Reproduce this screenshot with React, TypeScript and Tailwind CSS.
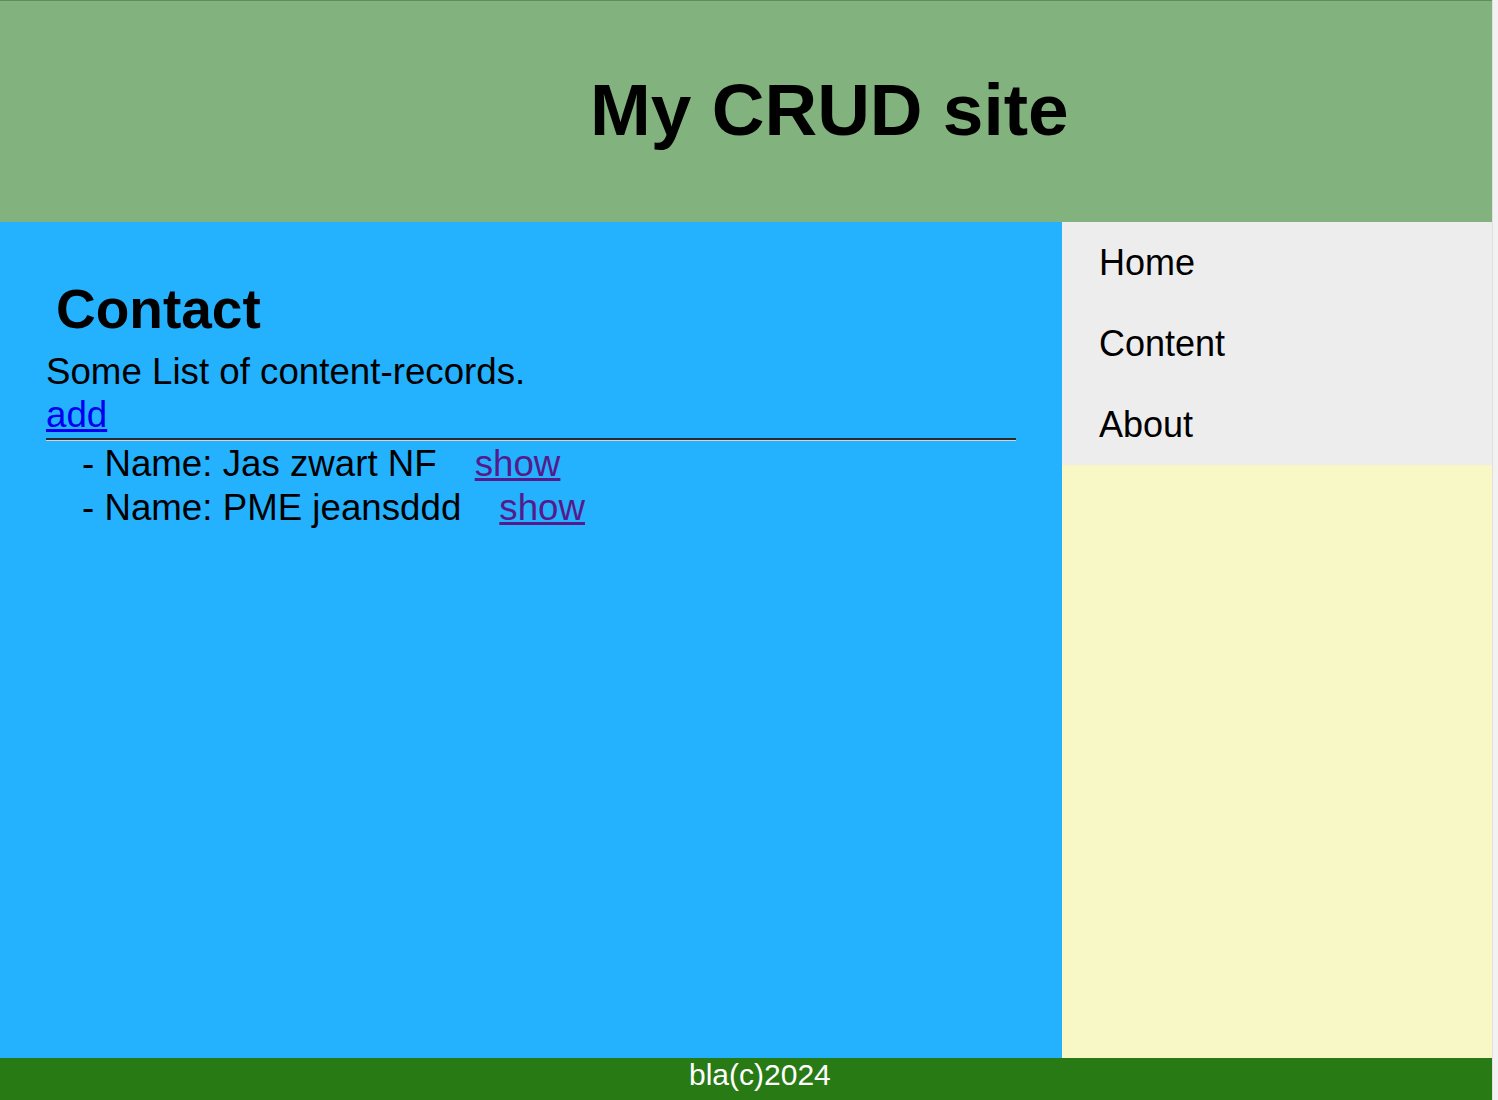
const items = ["Jas zwart NF", "PME jeansddd"];

const navLinks = ["Home", "Content", "About"];

export default function App() {
    return (
        <div className="flex w-full h-[1100px] overflow-hidden font-['Liberation_Sans',Arial,sans-serif]">
            <div className="flex flex-col w-[1492px] h-full">
                <header className="h-[222px] bg-[#82b27d] border-t border-[#5e8f59] pt-[67px] pl-[590px]">
                    <h1 className="text-[73px] leading-[84px] font-bold text-black">My CRUD site</h1>
                </header>

                <div className="flex h-[836px]">
                    <main className="w-[1062px] bg-[#24b1fe] pt-[57px] px-[46px]">
                        <h2 className="pl-[10px] text-[55px] leading-[60px] font-bold text-black">Contact</h2>
                        <p className="mt-[11px] text-[36.7px] leading-[43px] text-black">Some List of content-records.</p>
                        <a href="#" className="text-[36.7px] leading-[43px] text-[#0000ee] underline">add</a>
                        <div className="mt-[2px] h-[3px] border-t-2 border-t-[#2a2a2a] border-b border-b-[#d4d4d4]" />
                        <ul className="pl-[36px] pt-[1px]">
                            {items.map((name) => (
                                <li key={name} className="text-[36.7px] leading-[44px] text-black">
                                    - Name: {name}
                                    <a href="#" className="ml-[38px] text-[#551a8b] underline">show</a>
                                </li>
                            ))}
                        </ul>
                    </main>

                    <aside className="flex flex-col flex-1">
                        <nav className="bg-[#ededed] pl-[37px]">
                            {navLinks.map((link) => (
                                <div key={link} className="text-[36px] leading-[81px] text-black">{link}</div>
                            ))}
                        </nav>
                        <div className="flex-1 bg-[#f8f7c6]" />
                    </aside>
                </div>

                <footer className="h-[42px] bg-[#287a14] pl-[689px]">
                    <span className="text-[30px] leading-[34px] text-white">bla(c)2024</span>
                </footer>
            </div>
            <div className="flex-1 h-full bg-[#f2f2f2] border-l border-[#e0e0e0]" />
        </div>
    );
}
